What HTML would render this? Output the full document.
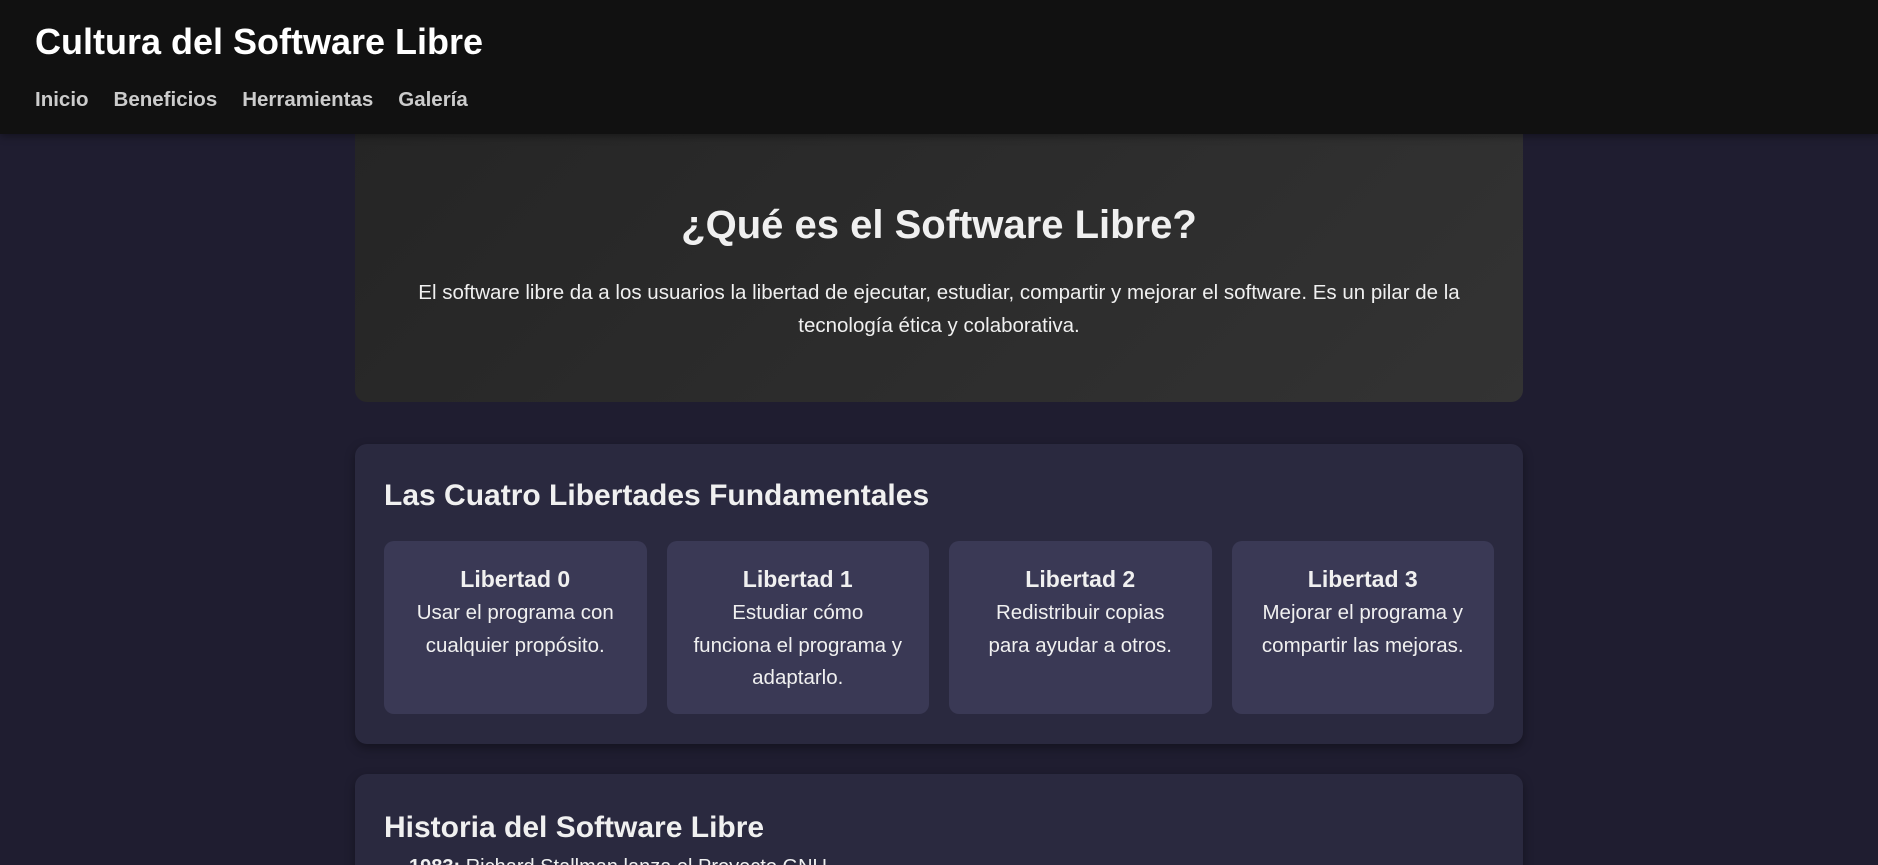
<!DOCTYPE html>
<html><head><meta charset="utf-8"><style>
*{box-sizing:border-box;margin:0;padding:0}
html,body{width:1878px;height:865px;overflow:hidden}
body{background:#1f1d30;font-family:"Liberation Sans",sans-serif;color:#f0f0f0}
header{height:134px;background:#111;padding:22px 35px 0;box-shadow:0 2px 8px rgba(0,0,0,.4);position:relative;z-index:2}
header h1{font-size:36px;font-weight:bold;color:#fff;line-height:40px}
nav{margin-top:26px}
nav a{color:#ccc;font-weight:bold;font-size:20.5px;text-decoration:none;margin-right:25px}
main{width:1168px;margin:0 auto}
.hero{height:268px;border-radius:0 0 12px 12px;background:linear-gradient(135deg,#252525,#333);text-align:center;padding-top:66px}
.hero h2{font-size:40px;font-weight:bold;line-height:50px;margin-bottom:27px}
.hero p{font-size:20.5px;line-height:32.6px;width:1090px;margin:0 auto}
.sec{background:#2a293f;border-radius:12px;margin-top:42px;padding:29px;box-shadow:0 4px 10px rgba(0,0,0,.35)}
.sec h2{font-size:30px;font-weight:bold;line-height:36px;margin-top:5px}
.cards{display:flex;gap:20px;margin-top:27px}
.card{flex:1;background:#3a3955;border-radius:10px;height:173px;text-align:center;padding-top:23px}
.card h3{font-size:23px;line-height:30px;margin-bottom:3px}
.card p{font-size:20.5px;line-height:32.6px;padding:0 26px}
.s2{height:300px}
li{margin-left:25px;font-size:20px;list-style:none;margin-top:10px}
</style></head><body>
<header><h1>Cultura del Software Libre</h1>
<nav><a>Inicio</a><a>Beneficios</a><a>Herramientas</a><a>Galería</a></nav></header>
<main>
<div class="hero"><h2>¿Qué es el Software Libre?</h2>
<p>El software libre da a los usuarios la libertad de ejecutar, estudiar, compartir y mejorar el software. Es un pilar de la tecnología ética y colaborativa.</p></div>
<div class="sec s2"><h2>Las Cuatro Libertades Fundamentales</h2>
<div class="cards">
<div class="card"><h3>Libertad 0</h3><p>Usar el programa con cualquier propósito.</p></div>
<div class="card"><h3>Libertad 1</h3><p>Estudiar cómo funciona el programa y adaptarlo.</p></div>
<div class="card"><h3>Libertad 2</h3><p>Redistribuir copias para ayudar a otros.</p></div>
<div class="card"><h3>Libertad 3</h3><p>Mejorar el programa y compartir las mejoras.</p></div>
</div></div>
<div class="sec" style="margin-top:30px;height:200px"><h2 style="margin-top:7px">Historia del Software Libre</h2>
<ul><li><b>1983:</b> Richard Stallman lanza el Proyecto GNU.</li></ul></div>
</main>
</body></html>
